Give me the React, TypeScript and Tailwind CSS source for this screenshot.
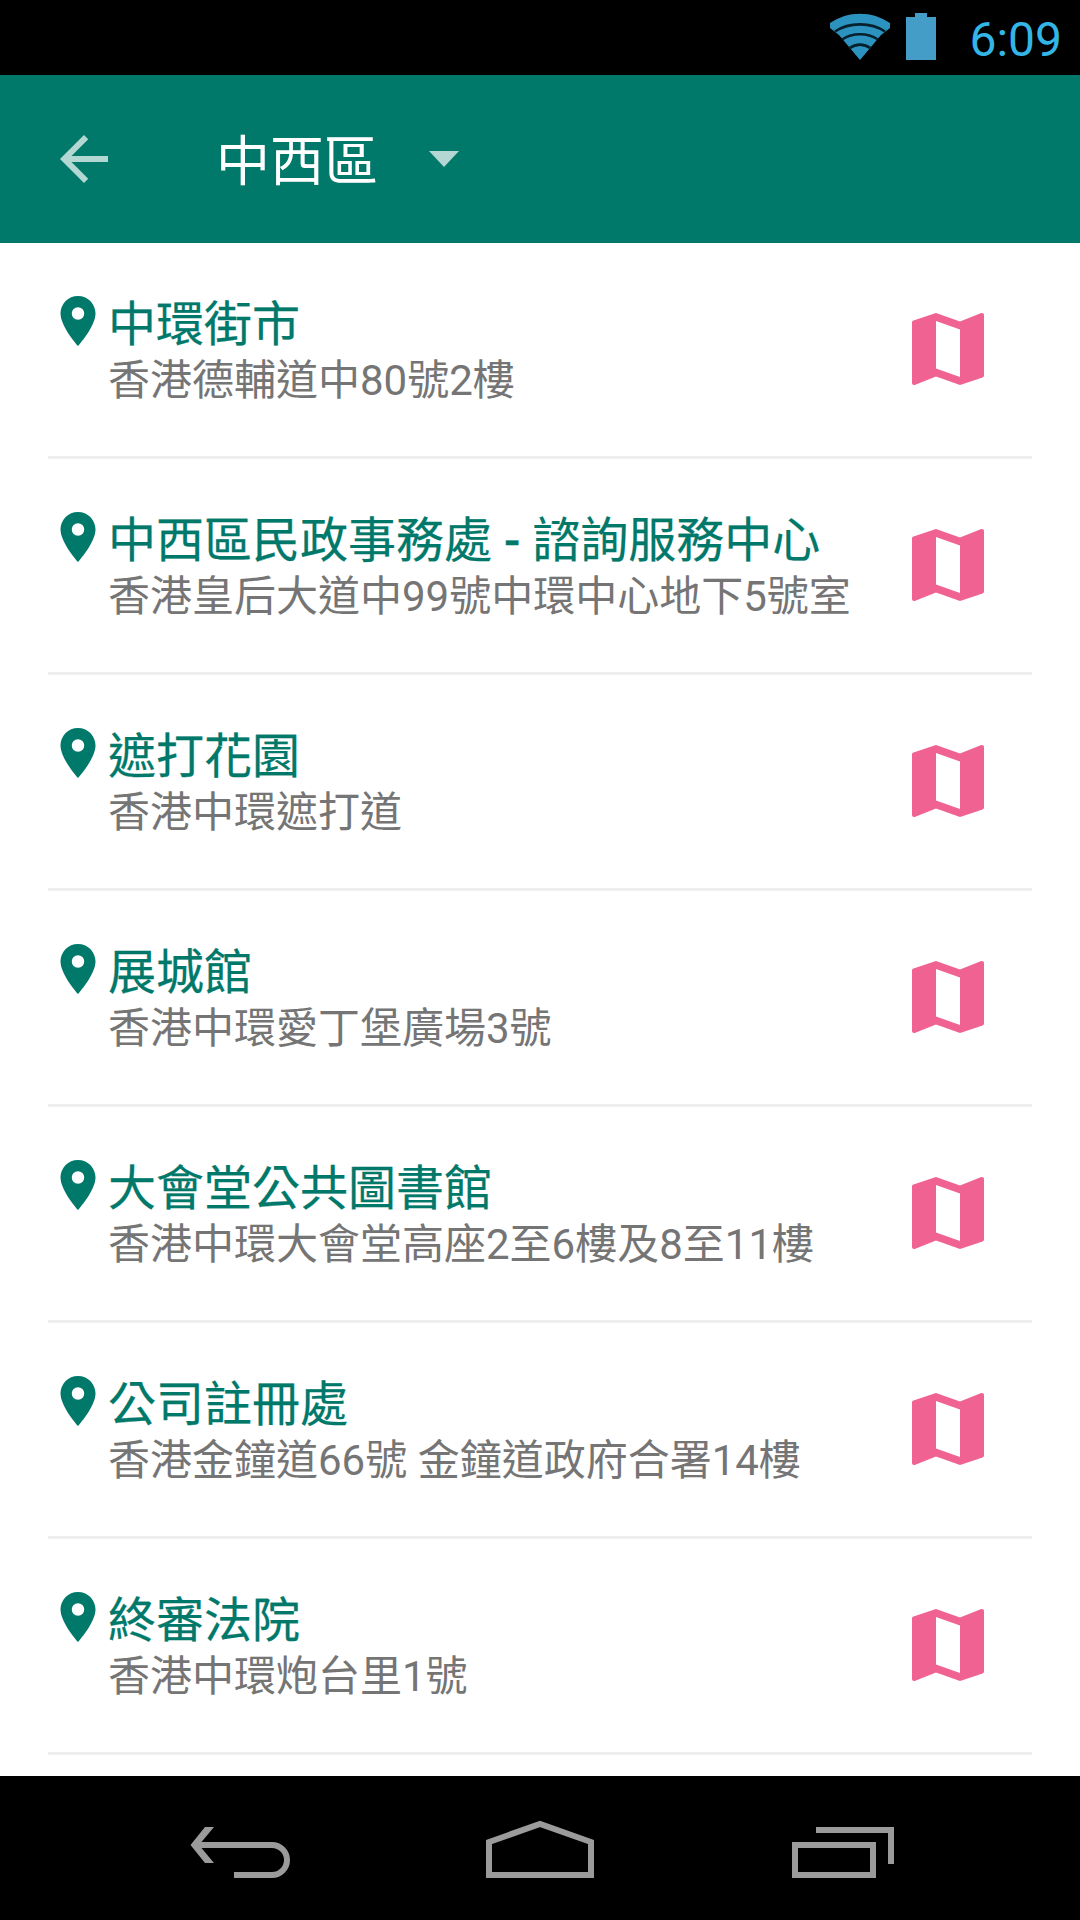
interface Place {
  name: string
  branch?: string
  address: string
}

const places: Place[] = [
  { name: '中環街市', address: '香港德輔道中80號2樓' },
  { name: '中西區民政事務處', branch: '諮詢服務中心', address: '香港皇后大道中99號中環中心地下5號室' },
  { name: '遮打花園', address: '香港中環遮打道' },
  { name: '展城館', address: '香港中環愛丁堡廣場3號' },
  { name: '大會堂公共圖書館', address: '香港中環大會堂高座2至6樓及8至11樓' },
  { name: '公司註冊處', address: '香港金鐘道66號 金鐘道政府合署14樓' },
  { name: '終審法院', address: '香港中環炮台里1號' }
]

function StatusBar() {
  return (
    <div className="flex h-[75px] shrink-0 items-start justify-end bg-black pr-[18px] text-[#33b5e5]">
      <svg className="mt-3 h-12 w-[60px]" viewBox="0 0 60 48" fill="#2c93c1">
        <path d="M30 48L9 23L0 16V11C18-1.500 42-1.500 60 11V16L51 23Z" />
        <g fill="none" stroke="#06202c" strokeWidth="2.600">
          <path d="M5 19.500C19 10 41 10 55 19.500" />
          <path d="M12 27.500C23 20.500 37 20.500 48 27.500" />
          <path d="M19 36.500C26 31.500 34 31.500 41 36.500" />
        </g>
      </svg>
      <svg className="mt-3 ml-4 h-12 w-[30px]" viewBox="0 0 30 48" fill="#439dc6">
        <path d="M9 1h12v4h9v43H0V5h9z" />
      </svg>
      <span className="ml-[33px] pt-3 text-[48px] leading-[56px]">6:09</span>
    </div>
  )
}

function Toolbar() {
  return (
    <header className="flex h-[168px] shrink-0 items-center bg-[#00796b] pl-12 text-white">
      <button type="button">
        <svg className="size-[72px] fill-white/70" viewBox="0 0 24 24">
          <path d="M20 11H7.830l5.590-5.590L12 4l-8 8 8 8 1.410-1.410L7.830 13H20v-2z" />
        </svg>
      </button>
      <button type="button" className="ml-24 flex items-center">
        <span className="pt-2 text-[54px] leading-[72px]">中西區</span>
        <svg className="ml-[51px] h-4 w-[30px] fill-white/70" viewBox="0 0 30 16">
          <path d="M0 0h30L15 16z" />
        </svg>
      </button>
    </header>
  )
}

function PlaceRow({ place }: { place: Place }) {
  return (
    <li className="mx-12 flex h-[216px] items-start border-b-[3px] border-[#eeeeee]">
      <svg className="mt-12 size-[60px] shrink-0 fill-[#00796b]" viewBox="0 0 24 24">
        <path d="M12 2C8.130 2 5 5.130 5 9c0 5.250 7 13 7 13s7-7.750 7-13c0-3.870-3.130-7-7-7zm0 9.500a2.500 2.500 0 1 1 0-5 2.500 2.500 0 0 1 0 5z" />
      </svg>
      <div className="mt-[52px] w-[792px] whitespace-nowrap">
        <h2 className="text-[48px] leading-[60px] font-normal text-[#00796b] [-webkit-text-stroke:0.25px_#00796b]">
          {place.name}
          {place.branch && (
            <>
              <span className="font-medium">{' - '}</span>
              {place.branch}
            </>
          )}
        </h2>
        <p className="-mt-0.5 text-[42px] leading-[56px] text-[#757575]">{place.address}</p>
      </div>
      <button type="button" className="mt-[58px]">
        <svg className="size-24 fill-[#f06292]" viewBox="0 0 24 24">
          <path d="M20.500 3l-.160.030L15 5.100 9 3 3.360 4.900c-.210.070-.360.250-.360.480V20.500c0 .280.220.500.500.500l.160-.030L9 18.900l6 2.100 5.640-1.900c.210-.070.360-.250.360-.480V3.500c0-.280-.220-.500-.500-.500zM15 19l-6-2.110V5l6 2.110V19z" />
        </svg>
      </button>
    </li>
  )
}

function NavigationBar() {
  const icon = 'h-[66px] w-[108px] fill-none stroke-[#9b9b9b]'

  return (
    <nav className="flex h-36 shrink-0 items-center justify-center gap-48 bg-black">
      <svg className={icon} viewBox="0 0 108 66" strokeWidth="6">
        <path d="M10 30h76a15 15 0 0 1 0 30H48" />
        <path d="M19 12h9L13 30l15 18h-9L4.500 30z" fill="#9b9b9b" stroke="none" />
      </svg>
      <svg className={icon} viewBox="0 0 108 66" strokeWidth="6">
        <path d="M3 60V27L54 9l51 18v33z" />
      </svg>
      <svg className={icon} viewBox="0 0 108 66" strokeWidth="6">
        <path d="M9 30h78v30H9zM30 15h75v34" />
      </svg>
    </nav>
  )
}

export default function App() {
  return (
    <div className="flex h-[1920px] w-[1080px] flex-col overflow-hidden bg-white font-[Roboto,'Noto_Sans_CJK_TC',sans-serif]">
      <StatusBar />
      <Toolbar />
      <ul className="min-h-0 flex-1 overflow-hidden">
        {places.map(place => (
          <PlaceRow key={place.name} place={place} />
        ))}
      </ul>
      <NavigationBar />
    </div>
  )
}
